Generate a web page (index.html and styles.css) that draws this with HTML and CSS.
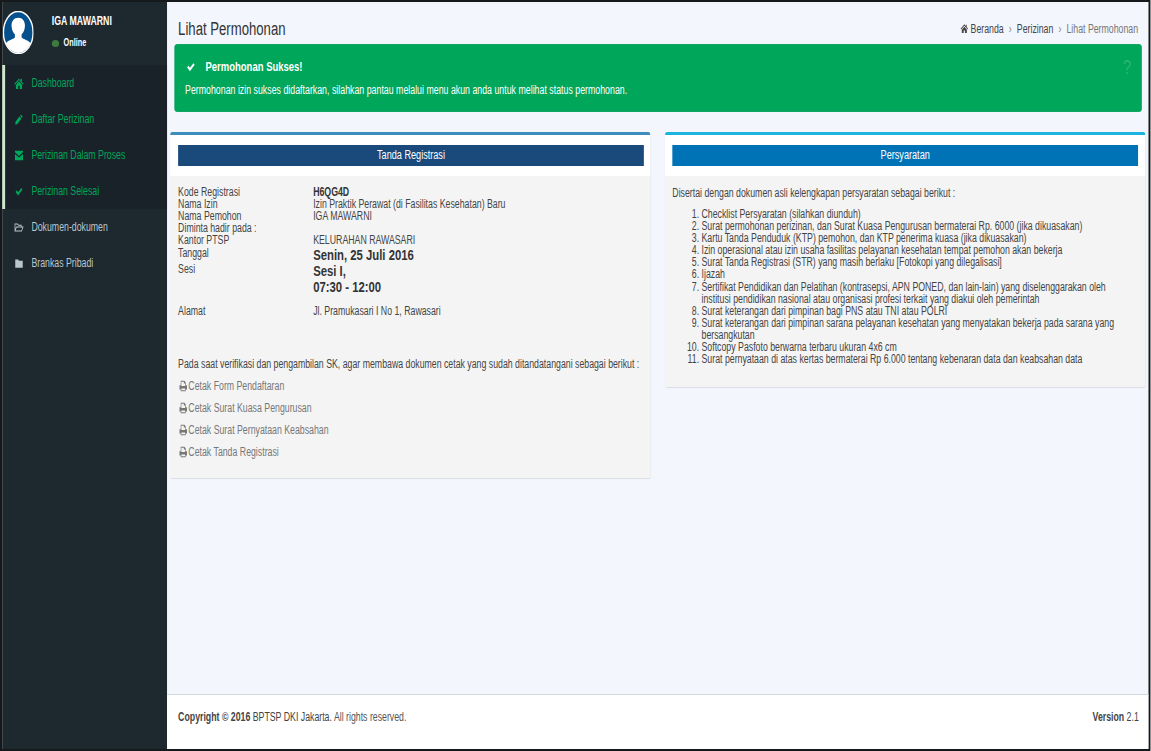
FILE: index.html
```html
<!DOCTYPE html>
<html lang="en">
<head>
  <meta charset="UTF-8">
  <meta name="viewport" content="width=device-width, initial-scale=1.0">
  <title>Lihat Permohonan</title>
  <link rel="stylesheet" href="styles.css">
</head>
<body>
  <svg class="icon-defs" width="0" height="0">
    <symbol id="i-home" viewBox="0 0 16 14"><path d="M8 0.500 0 7.400l1 1.100L8 2.600l7 5.900 1-1.100-3-2.600V1h-2v2.600zM2.600 8.800V14h4V10h2.800v4h4V8.800L8 4.200z"/></symbol>
    <symbol id="i-pencil" viewBox="0 0 14 14"><path d="M10.500 0.500 13.500 3.500 12 5 9 2zM8 3 11 6 4 13 0.500 13.500 1 10z"/></symbol>
    <symbol id="i-mail" viewBox="0 0 14 14"><path d="M0 1h14v2L7 7.500 0 3zM0 5l7 4.500L14 5v8H0z"/></symbol>
    <symbol id="i-check" viewBox="0 0 14 14"><path d="M1 7.500 3 5.500 5.500 8 11 2.500 13 4.500 5.500 12z"/></symbol>
    <symbol id="i-folder-open" viewBox="0 0 16 14"><path fill="none" stroke="currentColor" stroke-width="1.300" d="M1 11.500V2.500h4.500l1.500 1.500h5v2.500M1 11.500l2.500-5H15l-2.500 5z"/></symbol>
    <symbol id="i-folder" viewBox="0 0 14 14"><path d="M0.500 2h5l1.500 1.500h6.500V12.500H0.500z"/></symbol>
    <symbol id="i-print" viewBox="0 0 14 14"><path d="M3 1h6l2 2v3h2v5h-2v2H3v-2H1V6h2zM4 2v5h6V4H8V2zM4 10v2h6v-2z" fill-rule="evenodd"/></symbol>
  </svg>

  <div class="page">
  <div class="app">
    <aside class="sidebar">
      <div class="user-panel">
        <div class="avatar">
          <svg viewBox="0 0 32 44" width="42" height="43" preserveAspectRatio="none">
            <ellipse cx="16" cy="22" rx="15.500" ry="21.500" fill="#03508c" stroke="#fff" stroke-width="1.500"/>
            <path d="M16 7c-4.500 0-7 3.500-7 8 0 3.500 1.500 7 3.500 9v3c-2 2-7 2.500-9.500 6 3 6 8 10 13 10s10-4 13-10c-2.500-3.500-7.500-4-9.500-6v-3c2-2 3.500-5.500 3.500-9 0-4.500-2.500-8-7-8z" fill="#fff"/>
          </svg>
        </div>
        <div class="user-info">
          <div class="user-name">IGA MAWARNI</div>
          <div class="user-status"><span class="status-dot"></span>Online</div>
        </div>
      </div>
      <ul class="menu menu-active">
        <li><svg class="menu-icon"><use href="#i-home"/></svg>Dashboard</li>
        <li><svg class="menu-icon"><use href="#i-pencil"/></svg>Daftar Perizinan</li>
        <li><svg class="menu-icon"><use href="#i-mail"/></svg>Perizinan Dalam Proses</li>
        <li><svg class="menu-icon"><use href="#i-check"/></svg>Perizinan Selesai</li>
      </ul>
      <ul class="menu">
        <li><svg class="menu-icon"><use href="#i-folder-open"/></svg>Dokumen-dokumen</li>
        <li><svg class="menu-icon"><use href="#i-folder"/></svg>Brankas Pribadi</li>
      </ul>
    </aside>

    <div class="content-wrap">
      <main class="content">
        <div class="content-header">
          <h1>Lihat Permohonan</h1>
          <div class="breadcrumb">
            <svg class="crumb-icon"><use href="#i-home"/></svg>
            <span class="crumb">Beranda</span>
            <span class="crumb-sep">›</span>
            <span class="crumb">Perizinan</span>
            <span class="crumb-sep">›</span>
            <span class="crumb crumb-last">Lihat Permohonan</span>
          </div>
        </div>

        <div class="alert">
          <div class="alert-title"><svg class="alert-icon"><use href="#i-check"/></svg>Permohonan Sukses!</div>
          <p>Permohonan izin sukses didaftarkan, silahkan pantau melalui menu akun anda untuk melihat status permohonan.</p>
          <span class="alert-help">?</span>
        </div>

        <div class="panels">
          <section class="panel panel-primary">
            <div class="panel-head"><h2>Tanda Registrasi</h2></div>
            <div class="panel-body">
              <div class="data-table">
                <div class="data-row"><span>Kode Registrasi</span><strong>H6QG4D</strong></div>
                <div class="data-row"><span>Nama Izin</span><span>Izin Praktik Perawat (di Fasilitas Kesehatan) Baru</span></div>
                <div class="data-row"><span>Nama Pemohon</span><span>IGA MAWARNI</span></div>
                <div class="data-row"><span>Diminta hadir pada :</span><span></span></div>
                <div class="data-row"><span>Kantor PTSP</span><span>KELURAHAN RAWASARI</span></div>
                <div class="data-row data-date"><span>Tanggal</span><strong class="big">Senin, 25 Juli 2016</strong></div>
                <div class="data-row"><span>Sesi</span><strong class="big">Sesi I,<br>07:30 - 12:00</strong></div>
                <div class="data-row data-address"><span>Alamat</span><span>Jl. Pramukasari I No 1, Rawasari</span></div>
              </div>
              <p class="print-note">Pada saat verifikasi dan pengambilan SK, agar membawa dokumen cetak yang sudah ditandatangani sebagai berikut :</p>
              <ul class="print-links">
                <li><svg class="print-icon"><use href="#i-print"/></svg>Cetak Form Pendaftaran</li>
                <li><svg class="print-icon"><use href="#i-print"/></svg>Cetak Surat Kuasa Pengurusan</li>
                <li><svg class="print-icon"><use href="#i-print"/></svg>Cetak Surat Pernyataan Keabsahan</li>
                <li><svg class="print-icon"><use href="#i-print"/></svg>Cetak Tanda Registrasi</li>
              </ul>
            </div>
          </section>

          <section class="panel panel-info">
            <div class="panel-head"><h2>Persyaratan</h2></div>
            <div class="panel-body">
              <p class="req-intro">Disertai dengan dokumen asli kelengkapan persyaratan sebagai berikut :</p>
              <ol class="req-list">
                <li>Checklist Persyaratan (silahkan diunduh)</li>
                <li>Surat permohonan perizinan, dan Surat Kuasa Pengurusan bermaterai Rp. 6000 (jika dikuasakan)</li>
                <li>Kartu Tanda Penduduk (KTP) pemohon, dan KTP penerima kuasa (jika dikuasakan)</li>
                <li>Izin operasional atau izin usaha fasilitas pelayanan kesehatan tempat pemohon akan bekerja</li>
                <li>Surat Tanda Registrasi (STR) yang masih berlaku [Fotokopi yang dilegalisasi]</li>
                <li>Ijazah</li>
                <li>Sertifikat Pendidikan dan Pelatihan (kontrasepsi, APN PONED, dan lain-lain) yang diselenggarakan oleh institusi pendidikan nasional atau organisasi profesi terkait yang diakui oleh pemerintah</li>
                <li>Surat keterangan dari pimpinan bagi PNS atau TNI atau POLRI</li>
                <li>Surat keterangan dari pimpinan sarana pelayanan kesehatan yang menyatakan bekerja pada sarana yang bersangkutan</li>
                <li>Softcopy Pasfoto berwarna terbaru ukuran 4x6 cm</li>
                <li>Surat pernyataan di atas kertas bermaterai Rp 6.000 tentang kebenaran data dan keabsahan data</li>
              </ol>
            </div>
          </section>
        </div>
      </main>

      <footer class="footer">
        <div><strong>Copyright © 2016</strong> BPTSP DKI Jakarta. <span class="light">All rights reserved.</span></div>
        <div><strong>Version</strong> 2.1</div>
      </footer>
    </div>
  </div>
  </div>
</body>
</html>
```
FILE: styles.css
```css
* {
  box-sizing: border-box;
}

html, body {
  margin: 0;
  padding: 0;
  height: 100%;
}

body {
  font-family: "Liberation Sans", Arial, sans-serif;
  font-size: 12px;
  color: #444;
  background-color: #fff;
}

.icon-defs {
  display: none;
}

ul, ol {
  list-style: none;
  margin: 0;
  padding: 0;
}

h1, h2, p {
  margin: 0;
  font-weight: normal;
}

.page {
  width: 1151px;
  height: 751px;
  overflow: hidden;
}

/* the whole page is squeezed sideways, widths below are before the squeeze */
.app {
  display: flex;
  width: 1576px;
  height: 751px;
  border: solid #16191c;
  border-width: 2px 3px;
  transform: scaleX(0.73);
  transform-origin: 0 0;
}

/* sidebar */
.sidebar {
  width: 226px;
  flex-shrink: 0;
  background-color: #1e282f;
}

.user-panel {
  display: flex;
  height: 63px;
  padding: 9px 0 0 1px;
}

.avatar {
  width: 42px;
  height: 43px;
}

.user-info {
  margin-left: 25px;
  padding-top: 2px;
  color: #fff;
}

.user-name {
  font-weight: bold;
  line-height: 16px;
}

.user-status {
  display: flex;
  align-items: center;
  margin-top: 7px;
  line-height: 14px;
  font-size: 10px;
  font-weight: bold;
}

.status-dot {
  width: 10px;
  height: 7px;
  margin-right: 6px;
  border-radius: 50%;
  background-color: #3d7a3d;
}

.menu li {
  display: flex;
  align-items: center;
  height: 36px;
  padding-left: 16px;
  color: #b8c7ce;
}

.menu-active {
  background-color: #1a2229;
  border-left: 4px solid #cfe8cf;
}

.menu-active li {
  padding-left: 12px;
  color: #00a65a;
}

.menu-icon {
  width: 14px;
  height: 11px;
  margin-right: 10px;
  flex-shrink: 0;
  fill: currentColor;
}

/* main column */
.content-wrap {
  flex: 1;
  min-width: 0;
  display: flex;
  flex-direction: column;
  background-color: #f3f6fd;
}

.content {
  flex: 1;
  padding: 0 4px;
}

.content-header {
  display: flex;
  justify-content: space-between;
  align-items: center;
  height: 42px;
  padding: 11px 10px 0 11px;
}

.content-header h1 {
  font-size: 18px;
  line-height: 24px;
  color: #333;
}

.breadcrumb {
  display: flex;
  align-items: center;
  color: #444;
}

.crumb-icon {
  width: 12px;
  height: 9px;
  margin-right: 3px;
  fill: #444;
}

.crumb-sep {
  margin: 0 7px;
  color: #888;
}

.crumb-last {
  color: #777;
}

.alert {
  position: relative;
  height: 68px;
  margin: 0 5.500px;
  padding: 14px 14px 0;
  border-radius: 3px;
  border: 1px solid #00a05a;
  background-color: #00a65a;
  color: #fff;
}

.alert-title {
  display: flex;
  align-items: center;
  font-size: 13px;
  font-weight: bold;
  line-height: 16px;
}

.alert-icon {
  width: 15px;
  height: 12px;
  margin-right: 13px;
  fill: #fff;
}

.alert p {
  margin-top: 7px;
  line-height: 16px;
  letter-spacing: 0.030px;
}

.alert-help {
  position: absolute;
  top: 11px;
  right: 13px;
  font-size: 20px;
  color: #2bb673;
}

.panels {
  display: grid;
  grid-template-columns: 658px 658px;
  column-gap: 20px;
  align-items: start;
  margin-top: 20px;
}

.panel {
  border-top: 3px solid #3c8dbc;
  border-radius: 3px;
  box-shadow: 0 1px 1px rgba(0, 0, 0, 0.1);
}

.panel-info {
  border-top-color: #1cb5e0;
}

.panel-head {
  height: 41px;
  padding: 10px 9px 10px 11px;
  background-color: #fff;
}

.panel-info .panel-head {
  padding: 10px 10px 10px 10px;
}

.panel-head h2 {
  height: 21px;
  font-size: 12.500px;
  line-height: 21px;
  text-align: center;
  color: #fff;
  background-color: #1a4a7c;
}

.panel-info .panel-head h2 {
  background-color: #0073b7;
}

.panel-body {
  padding: 10px 11px;
  background-color: #f4f4f4;
}

.panel-info .panel-body {
  padding-left: 10px;
}

.data-row {
  display: grid;
  grid-template-columns: 185px 1fr;
  line-height: 12px;
}

.data-row strong {
  color: #333;
}

.data-row .big {
  font-size: 15.500px;
  line-height: 16px;
}

.data-date {
  margin-top: 1px;
}

.data-address {
  margin-top: 10px;
}

.print-note {
  margin-top: 39px;
  line-height: 16px;
}

.print-links {
  margin-top: 3px;
  padding-bottom: 5px;
}

.print-links li {
  display: flex;
  align-items: center;
  height: 22px;
  color: #777;
}

.print-icon {
  width: 14px;
  height: 12px;
  flex-shrink: 0;
  fill: #777;
}

.req-intro {
  line-height: 16px;
  margin-top: -1px;
}

.req-list {
  list-style: decimal;
  margin-top: 7px;
  padding: 0 12px 12px 40px;
  line-height: 12.100px;
}

/* footer */
.footer {
  display: flex;
  justify-content: space-between;
  align-items: center;
  height: 55px;
  padding: 0 13px 10px 15px;
  border-top: 1px solid #d2d6de;
  background-color: #fff;
}

.light {
  color: #555;
}
```
